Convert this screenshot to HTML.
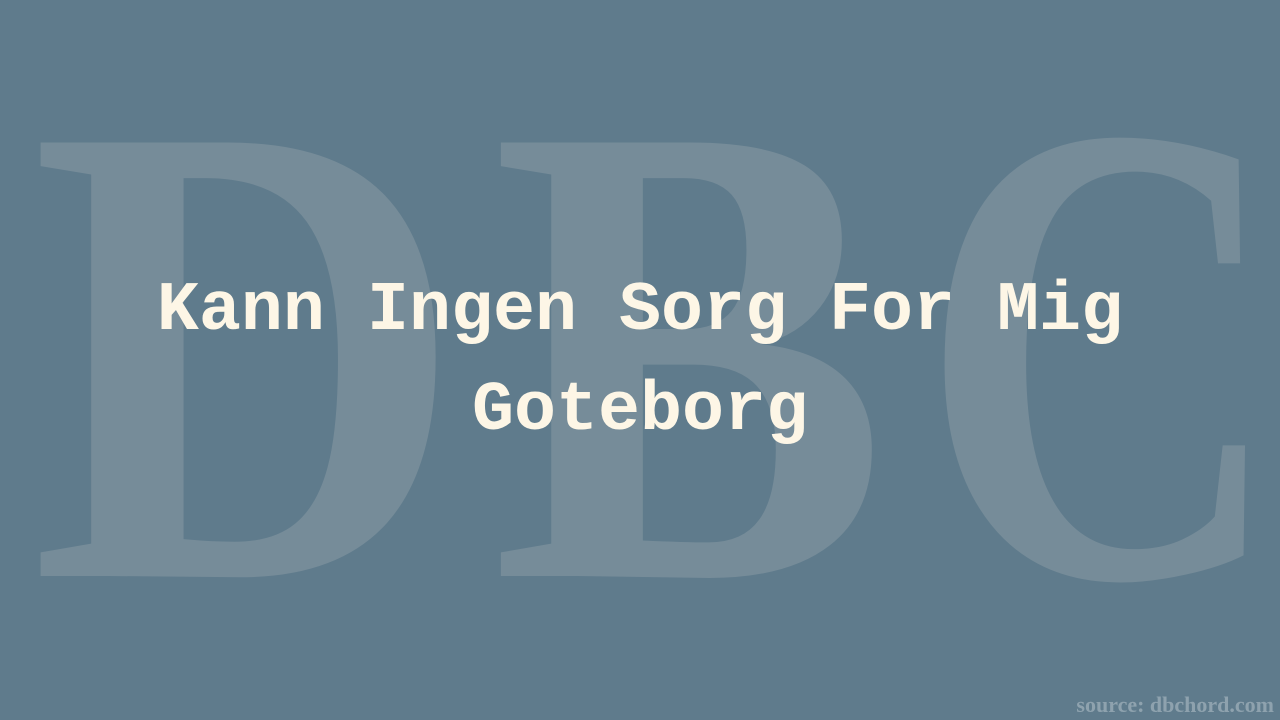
<!DOCTYPE html>
<html><head><meta charset="utf-8"><style>
html,body{margin:0;padding:0}
body{width:1280px;height:720px;background:#5f7b8c;position:relative;overflow:hidden}
.L{position:absolute;top:0;font-family:"Liberation Serif",serif;font-weight:bold;font-size:662px;line-height:1;color:#768c99;transform-origin:0 0}
.t{position:absolute;left:0;width:1280px;text-align:center;font-family:"Liberation Mono",monospace;font-weight:bold;font-size:70px;color:#fdf6e6;line-height:1}
.src{position:absolute;right:6px;bottom:2px;font-family:"Liberation Serif",serif;font-weight:bold;font-size:22px;color:#8ea2ae}
</style></head><body>
<div class="L" style="left:30px;top:23px;transform:scaleX(0.91)">D</div>
<div class="L" style="left:491px;top:23px;transform:scaleX(0.9)">B</div>
<div class="L" style="left:920px;top:23px;transform:scaleX(0.76)">C</div>
<div class="t" style="top:277px">Kann Ingen Sorg For Mig</div>
<div class="t" style="top:377px">Goteborg</div>
<div class="src">source: dbchord.com</div>
</body></html>
